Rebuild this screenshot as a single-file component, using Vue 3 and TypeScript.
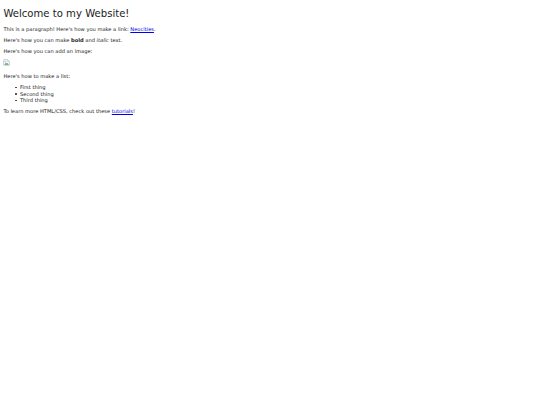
<script setup lang="ts">
const items: string[] = ['First thing', 'Second thing', 'Third thing']
</script>

<template>
  <main class="page">
    <h1>Welcome to my Website!</h1>
    <p>This is a paragraph! Here's how you make a link: <a href="#">Neocities</a>.</p>
    <p>Here's how you can make <strong>bold</strong> and <em>italic</em> text.</p>
    <p>Here's how you can add an image:</p>
    <svg class="broken" width="7" height="7" viewBox="0 0 16 16" role="img" aria-label="Broken image">
      <path d="M1.5 1.5H10.5L14.5 5.5V14.5H1.5Z" fill="#fff" stroke="#a9b4c0" stroke-width="1.4" />
      <path d="M10.5 1.5V5.5H14.5" fill="#dfe6ee" stroke="#a9b4c0" stroke-width="1" />
      <path d="M3 4h5v4H3z" fill="#bcd4f2" />
      <path d="M3 13l3.5-4.5 2.5 2.5 2-2 2 4z" fill="#4fa64a" />
    </svg>
    <p>Here's how to make a list:</p>
    <ul>
      <li v-for="item in items" :key="item">{{ item }}</li>
    </ul>
    <p>To learn more HTML/CSS, check out these <a href="#">tutorials</a>!</p>
  </main>
</template>

<style scoped>
.page {
  padding: 3.4px;
  font-family: "DejaVu Sans", sans-serif;
  font-size: 5.13px;
  line-height: 6.5px;
  color: #222;
  background: #fff;
}
h1 {
  margin: 3.5px 0 6px;
  font-size: 10.1px;
  line-height: 13px;
  font-weight: 400;
}
p {
  margin: 0 0 4.5px;
}
a {
  color: #00e;
  text-decoration: underline;
  text-decoration-thickness: 0.5px;
}
.broken {
  display: block;
  margin: 0 0 7.5px;
}
ul {
  margin: 0 0 4.5px;
  padding-left: 12px;
  list-style: none;
}
li {
  display: flex;
  align-items: center;
  gap: 3px;
}
li::before {
  content: "";
  width: 1.6px;
  height: 1.6px;
  border-radius: 50%;
  background: #333;
}
</style>

<style>
html, body {
  margin: 0;
  background: #fff;
}
</style>
